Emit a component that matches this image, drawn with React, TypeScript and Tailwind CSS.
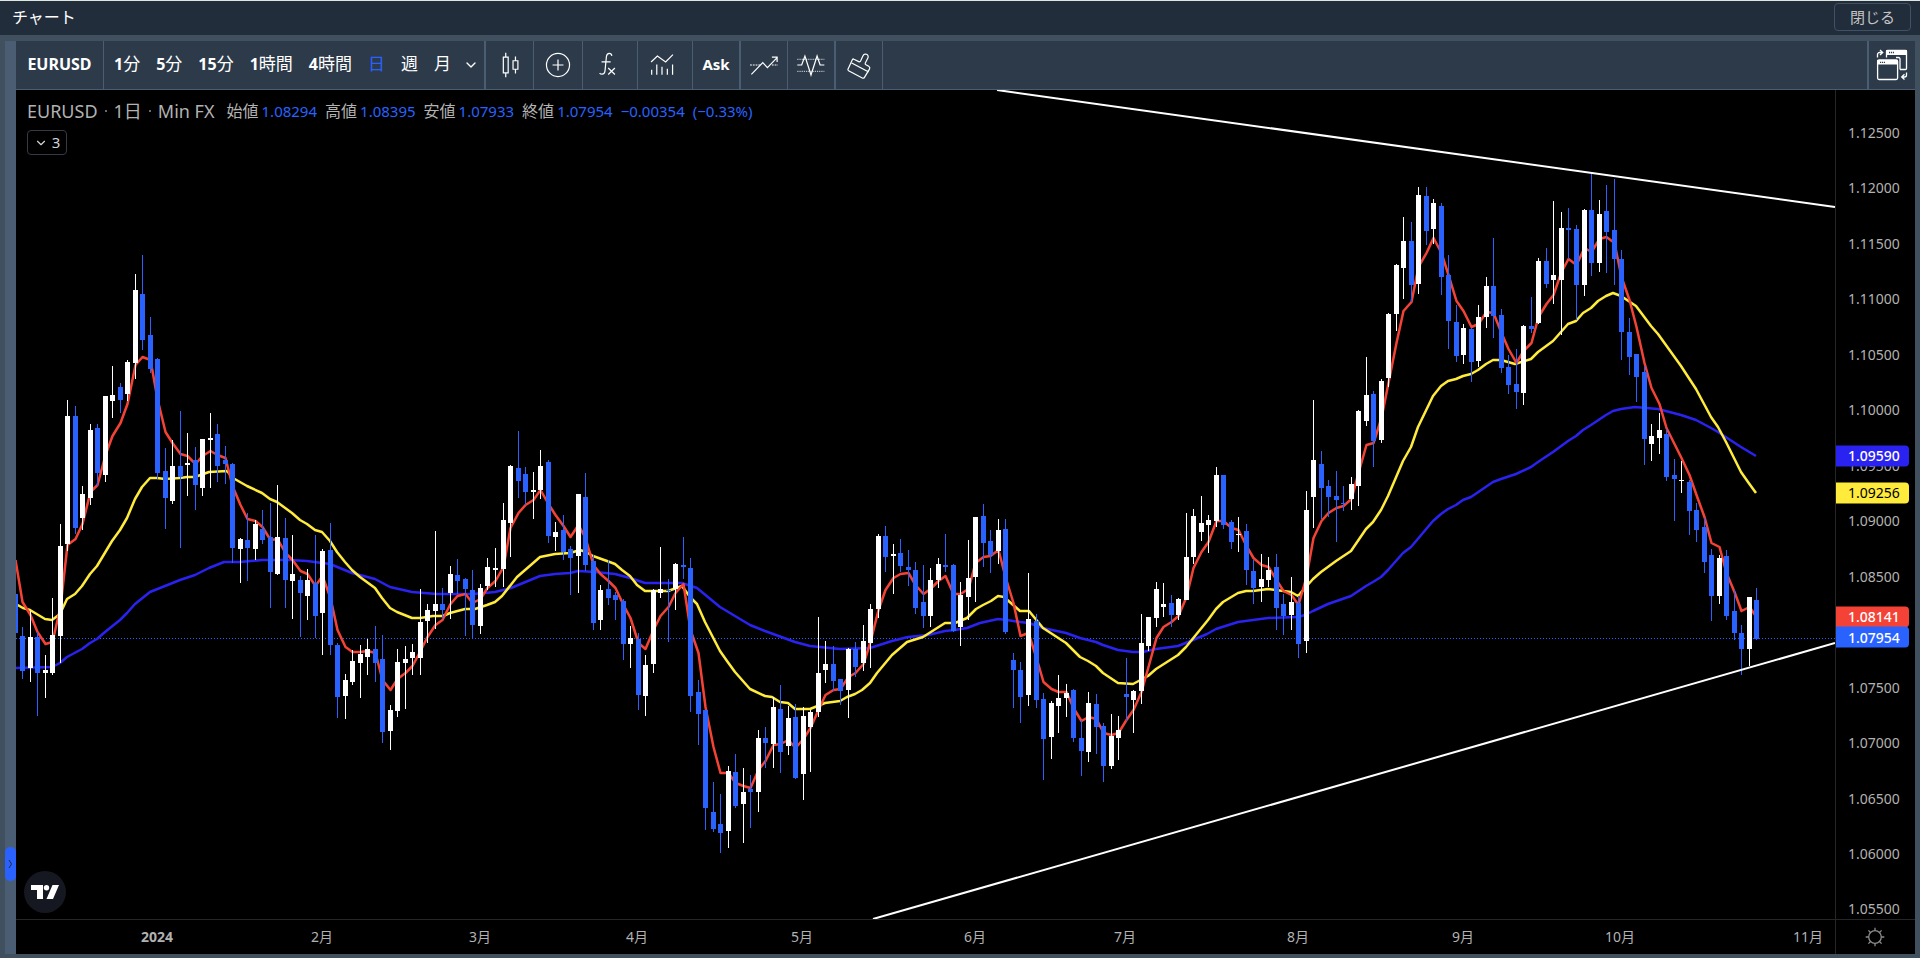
import { useState } from "react";
import type { ReactNode } from "react";
import { ChevronDown } from "lucide-react";

// plot area of the main pane
const PANE = { x: 16, y: 90, w: 1819, h: 829 };
const FIRST_BAR = -7;

const barX = (i: number) => Math.floor(67.6 + (i + FIRST_BAR) * 7.507);
const priceTop = (price: number) =>
  ((133 + (1.125 - price) * 11092 - PANE.y) / PANE.h) * 100;

// [up, high, body top, body bottom, low]
const candles = [
  [0,594,594,633,633],[0,627,636,671,679],[1,611,637,668,682],[0,632,637,673,716],[1,655,670,673,698],
  [1,598,635,673,675],[1,524,546,636,663],[1,400,416,544,551],[0,406,416,528,534],[1,486,494,518,530],
  [1,424,430,498,505],[0,424,428,473,486],[1,396,396,475,482],[1,366,395,401,418],[0,383,387,400,413],
  [1,360,362,394,401],[1,274,290,363,379],[0,255,294,340,350],[0,317,335,369,373],[0,358,359,473,479],
  [0,448,471,498,529],[1,440,466,501,504],[0,411,466,477,548],[1,433,463,465,496],[0,447,460,485,510],
  [1,439,439,488,496],[1,413,438,440,488],[0,424,434,466,482],[0,446,460,464,484],[0,463,464,548,563],
  [1,538,539,549,583],[0,513,540,548,581],[1,520,524,549,560],[0,510,529,540,544],[0,503,537,572,608],
  [1,485,537,574,575],[0,518,538,580,608],[1,535,574,581,619],[0,576,580,593,637],[1,569,580,596,620],
  [0,535,583,616,638],[1,549,551,613,655],[0,523,550,645,655],[0,643,645,697,718],[1,674,680,696,719],
  [1,650,661,682,685],[1,645,654,663,698],[1,639,649,657,675],[0,626,649,663,682],[0,635,659,732,743],
  [1,705,710,731,750],[1,649,662,711,717],[1,646,659,663,709],[1,644,652,658,675],[1,589,622,658,675],
  [1,604,610,621,643],[1,531,604,611,629],[0,588,604,610,619],[1,566,574,593,619],[0,559,575,581,594],
  [0,578,579,589,636],[0,570,590,625,638],[1,584,588,626,634],[1,558,567,586,590],[1,548,568,570,587],
  [1,503,520,569,587],[1,465,466,523,557],[0,431,468,481,498],[0,467,474,492,505],[1,472,490,492,519],
  [1,450,466,490,499],[0,460,462,536,543],[1,522,532,537,551],[0,515,530,552,560],[0,546,549,558,595],
  [1,494,494,556,593],[0,473,497,565,571],[0,555,561,623,630],[1,585,590,620,630],[0,560,589,598,605],
  [0,592,595,600,620],[0,599,601,644,660],[1,626,638,644,668],[0,633,639,695,710],[1,655,665,696,716],
  [1,589,590,664,673],[1,547,589,593,598],[0,579,590,591,642],[1,563,564,589,610],[0,537,565,567,579],
  [0,558,568,696,712],[0,680,692,714,745],[0,710,710,808,830],[0,782,812,829,832],[0,794,824,833,853],
  [1,766,771,831,848],[0,754,772,806,808],[1,768,792,804,843],[0,775,789,792,828],[1,730,738,792,812],
  [0,727,738,743,768],[1,697,707,744,768],[0,685,709,752,773],[1,706,718,746,755],[0,704,717,778,779],
  [1,707,716,774,800],[1,710,712,727,772],[1,617,673,712,717],[1,641,664,670,683],[0,646,664,681,691],
  [0,679,679,691,705],[1,648,649,690,718],[0,642,649,667,677],[1,625,641,663,671],[1,604,609,643,668],
  [1,534,536,609,618],[0,526,536,557,572],[1,544,554,556,594],[0,539,553,566,572],[0,550,567,570,586],
  [0,562,570,608,614],[0,565,602,616,628],[1,568,580,616,627],[1,558,564,580,588],[0,534,565,567,572],
  [0,564,565,631,632],[1,582,595,627,646],[1,540,578,597,620],[1,517,517,577,602],[0,504,516,543,567],
  [0,530,541,555,573],[1,519,530,551,564],[0,519,529,632,634],[0,653,660,670,708],[0,662,670,697,723],
  [1,573,619,695,706],[0,614,621,700,708],[0,693,699,739,780],[1,701,703,737,759],[1,675,698,706,733],
  [1,684,693,698,717],[0,689,690,738,742],[0,720,738,751,776],[1,692,703,752,762],[0,694,704,727,754],
  [0,723,726,766,782],[1,714,736,766,769],[1,716,730,738,760],[0,658,694,697,721],[1,690,691,700,733],
  [1,614,643,691,704],[1,617,617,646,651],[1,582,589,618,627],[1,583,604,607,617],[0,595,603,615,627],
  [1,598,599,615,620],[1,513,557,600,600],[1,509,516,557,564],[1,496,523,532,541],[1,515,520,525,553],
  [1,467,475,521,527],[0,475,475,525,529],[0,520,522,542,549],[1,517,534,535,552],[0,524,531,570,585],
  [0,560,571,588,604],[1,554,579,587,602],[1,557,570,580,587],[0,554,567,608,630],[0,594,604,616,635],
  [1,577,602,615,630],[0,596,603,644,658],[1,491,510,641,653],[1,400,460,497,528],[0,451,464,488,519],
  [0,480,486,497,517],[0,471,496,500,542],[0,486,503,504,511],[1,477,484,499,510],[1,410,411,486,506],
  [1,357,395,421,426],[0,391,394,441,467],[1,379,381,440,443],[1,313,314,378,387],[1,264,265,314,331],
  [1,217,241,268,299],[0,222,241,285,302],[1,187,195,284,294],[0,187,196,231,245],[1,199,203,229,244],
  [0,203,206,277,295],[0,255,275,321,349],[0,305,322,356,362],[1,324,328,355,364],[0,328,329,362,382],
  [1,305,317,361,367],[1,277,286,317,328],[0,238,286,316,338],[0,309,315,368,373],[0,355,367,385,394],
  [0,349,384,392,409],[1,325,326,393,405],[0,297,326,329,333],[1,258,261,323,324],[0,248,261,284,288],
  [1,201,275,280,304],[1,212,228,280,335],[0,208,228,230,259],[0,225,229,285,320],[1,209,210,285,296],
  [0,173,210,263,276],[1,200,214,263,272],[0,185,211,232,273],[0,179,230,259,285],[0,250,259,332,360],
  [0,318,332,357,375],[0,354,354,377,402],[0,366,372,439,465],[1,424,436,444,461],[1,413,430,438,454],
  [0,429,434,477,481],[0,459,475,479,521],[1,461,480,481,493],[0,480,482,511,535],[0,503,510,530,542],
  [0,518,527,562,573],[0,549,555,596,621],[1,555,558,596,604],[0,550,556,616,620],[0,590,611,633,640],
  [0,625,633,649,675],[1,597,597,649,666],[0,588,600,639,640],
];

// short average, one value per bar
const fastMa = [
  560,602,615,632,644,642,607,545,539,524,492,485,455,436,423,404,365,357,360,399,432,443,454,456,464,456,451,455,458,
  486,505,519,521,527,540,539,553,560,571,574,586,576,598,630,647,652,652,651,653,680,690,679,673,666,651,637,625,620,
  604,596,594,603,599,588,581,567,528,513,505,500,490,504,515,526,537,525,538,565,574,581,588,605,618,643,649,630,616,
  607,593,584,630,653,707,747,773,773,783,786,788,770,761,745,744,740,748,739,728,710,695,690,689,677,673,664,642,610,
  590,578,574,573,585,594,589,581,576,594,594,589,563,557,556,550,577,603,636,633,658,682,689,692,692,708,721,717,719,
  733,735,733,720,710,692,667,638,627,622,616,597,568,552,542,521,521,528,530,546,558,565,567,580,591,595,605,577,538,
  521,513,508,506,499,473,445,443,418,383,343,311,302,267,253,238,253,275,301,311,327,324,312,313,333,349,363,351,343,
  317,304,295,272,259,265,248,252,239,237,243,277,300,327,363,388,404,428,444,458,475,495,517,543,547,573,592,611,607,
  617,
];

const midMa =
  "16,604 23,608 30,610 45,619 52,620 60,614 67,599 75,594 82,586 90,574 97,566 112,541 120,530 127,518 135,499 142,487 150,478 157,478 165,479 180,478 187,477 195,477 209,472 227,471 233,478 247,486 262,493 270,499 277,502 292,513 300,520 307,524 315,530 322,532 330,541 337,552 345,562 352,570 360,577 375,588 382,598 390,608 397,612 412,618 420,618 433,616 443,616 450,613 465,609 475,609 487,605 495,602 502,596 517,577 532,564 540,557 555,554 570,553 580,550 586,552 593,556 607,561 615,564 622,570 630,576 637,585 645,591 668,591 682,586 690,597 697,604 705,622 720,651 727,661 735,672 750,689 765,696 772,697 780,702 788,703 795,709 810,709 825,703 840,701 847,697 855,694 862,690 870,683 877,673 892,655 907,642 923,637 945,623 955,623 967,618 976,609 983,605 991,601 998,596 1004,597 1020,611 1029,611 1043,628 1066,643 1080,657 1088,661 1096,666 1103,673 1118,683 1133,684 1148,676 1156,669 1178,655 1186,647 1208,620 1216,609 1223,602 1238,593 1246,591 1253,591 1268,589 1291,592 1298,596 1305,588 1313,579 1321,572 1336,561 1351,551 1366,529 1373,522 1381,510 1388,496 1403,461 1411,447 1418,427 1433,396 1441,386 1448,381 1456,379 1463,376 1471,374 1478,370 1486,364 1493,360 1501,360 1515,364 1531,359 1538,352 1553,341 1568,324 1576,321 1583,313 1591,308 1598,301 1606,296 1613,293 1621,296 1636,306 1651,326 1658,334 1681,366 1696,389 1711,417 1718,427 1726,442 1741,472 1748,482 1756,493";

const slowMa =
  "16,668 52,667 60,663 67,657 82,649 90,643 97,639 105,632 120,620 127,613 135,604 150,592 180,580 195,575 209,568 224,562 240,562 262,560 290,560 307,561 330,564 352,573 375,579 390,587 412,592 437,594 473,594 495,592 511,588 540,576 555,574 570,573 578,571 595,572 615,574 630,578 645,583 682,583 697,588 720,607 750,625 765,631 795,642 810,646 840,649 870,648 892,641 908,637 928,635 945,631 955,630 967,628 980,623 998,619 1007,620 1020,622 1029,623 1043,628 1066,633 1080,638 1096,642 1103,645 1118,650 1133,652 1143,652 1156,649 1178,646 1193,640 1207,634 1216,629 1238,622 1253,620 1268,618 1298,617 1305,615 1313,611 1328,604 1351,596 1366,586 1373,582 1381,577 1388,570 1403,553 1411,547 1433,521 1441,514 1448,509 1456,505 1463,500 1471,497 1493,482 1501,479 1516,474 1531,467 1538,462 1553,452 1568,441 1576,436 1583,430 1591,425 1606,415 1613,411 1621,409 1635,407 1658,409 1681,415 1696,420 1711,428 1718,432 1741,447 1756,456";

const intervals = [
  { n: "1", unit: "分" },
  { n: "5", unit: "分" },
  { n: "15", unit: "分" },
  { n: "1", unit: "時間" },
  { n: "4", unit: "時間" },
  { n: "", unit: "日" },
  { n: "", unit: "週" },
  { n: "", unit: "月" },
];

const ohlc = [
  { label: "始値", value: "1.08294" },
  { label: "高値", value: "1.08395" },
  { label: "安値", value: "1.07933" },
  { label: "終値", value: "1.07954" },
];

const prices = Array.from({ length: 15 }, (_, i) => 1.125 - i * 0.005);

const tags = [
  { price: 1.0959, style: "bg-[#2a22f0] font-medium text-white" },
  { price: 1.09256, style: "bg-[#ffeb3b] text-black" },
  { price: 1.08141, style: "bg-[#f44336] font-medium text-white" },
  { price: 1.07954, style: "bg-[#2962ff] font-medium text-white" },
];

const months = [
  { x: 157, label: "2024" },
  { x: 322, label: "2月" },
  { x: 480, label: "3月" },
  { x: 637, label: "4月" },
  { x: 802, label: "5月" },
  { x: 975, label: "6月" },
  { x: 1125, label: "7月" },
  { x: 1298, label: "8月" },
  { x: 1463, label: "9月" },
  { x: 1620, label: "10月" },
  { x: 1808, label: "11月" },
];

const Icon = ({ children }: { children: ReactNode }) => (
  <svg viewBox="0 0 28 28" fill="none" stroke="currentColor" className="h-[34px] w-[34px]">
    {children}
  </svg>
);

const Tool = ({ label, className, children }: { label: string; className: string; children: ReactNode }) => (
  <button
    type="button"
    aria-label={label}
    className={`flex shrink-0 items-center justify-center border-[#4a5d72] hover:bg-[#364759] ${className}`}
  >
    {children}
  </button>
);

const Toolbar = () => {
  const [interval, setInterval] = useState(5);

  return (
    <div className="flex h-[49px] shrink-0 border-b border-[#4a5d72] bg-[#2c3a4a] text-white">
      <button type="button" className="w-[88px] shrink-0 border-r border-[#4a5d72] pb-[2px] text-base font-bold">
        EURUSD
      </button>
      <div className="flex w-[382px] shrink-0 items-center border-r-2 border-[#4a5d72] pl-[2px]">
        {intervals.map((item, i) => (
          <button
            key={item.n + item.unit}
            type="button"
            onClick={() => setInterval(i)}
            className={`h-full px-2 pb-[2px] text-base whitespace-nowrap ${interval === i ? "text-[#2962ff]" : "text-white"}`}
          >
            <span className="font-bold">{item.n}</span>
            <span className="text-[17px]">{item.unit}</span>
          </button>
        ))}
        <button type="button" aria-label="時間足" className="flex h-full flex-1 items-center justify-center">
          <ChevronDown className="h-4 w-4" strokeWidth={2} />
        </button>
      </div>
      <Tool label="ローソク足" className="w-12 border-r">
        <Icon>
          <path d="M8.500 7.500h4v13h-4zM10.500 4v3.500M10.500 20.500V24M16.500 10.500h4v7h-4zM18.500 7v3.500M18.500 17.500V21" />
        </Icon>
      </Tool>
      <Tool label="比較" className="w-[49px] border-r">
        <Icon>
          <circle cx="14" cy="14" r="9.500" />
          <path d="M9.500 14h9M14 9.500v9" />
        </Icon>
      </Tool>
      <Tool label="インジケーター" className="w-[55px] border-r pr-[6px]">
        <Icon>
          <path d="M18 6.500c-.2-1.300-.9-2-2.100-2-1.500 0-2.200 1-2.400 2.700l-1.100 11.200c-.2 2.100-1 3.100-2.500 3.100-.8 0-1.500-.3-2-.9M9.500 11.500H17M15 16.500l5.500 5.300M20.500 16.500l-5.500 5.300" />
        </Icon>
      </Tool>
      <Tool label="テンプレート" className="w-[55px] border-r pr-[6px]">
        <Icon>
          <path d="M5 11.500l5.200-4.900 6.800 4.900 6-6M5.500 18v4M9.700 13.500V22M14 15.500V22M18.400 17v5M22.700 13.500V22" />
        </Icon>
      </Tool>
      <Tool label="Ask" className="w-12 border-r-2 pb-[2px]">
        <span className="text-[15px] font-bold">Ask</span>
      </Tool>
      <Tool label="トレンドライン" className="w-[47px] border-r">
        <Icon>
          <path d="M3.600 21.700l9.400-9.600 3.800 4.100 8-8.300M20.500 7.500h4.300v4" />
          <path d="M2.500 14h8.500M20.500 14h5" strokeDasharray="1.500 .8" />
        </Icon>
      </Tool>
      <Tool label="波形" className="w-12 border-r-2">
        <Icon>
          <path d="M2.700 14h3.600L9 6.600l5 15.600 5-15.600 2.500 7.400h3.500" />
          <path d="M2.700 9.300h22.300M2.700 19.200h22.300" strokeDasharray="1 .8" strokeWidth=".7" />
        </Icon>
      </Tool>
      <Tool label="ブラシ" className="w-[47px] border-r">
        <Icon>
          <path
            d="M9.800 9.200l4 2c.6.300 1.200.1 1.500-.5l1.900-4.200c.6-1.400 1.800-1.800 3-1.300 1.300.6 1.700 1.900 1.100 3.100l-2.100 4c-.3.600-.1 1.200.5 1.500l2.300 1.300c.8.500 1.100 1.300.7 2.100l-4.200 7c-.4.700-1.100.9-1.800.5L5.400 18.700c-.5-.3-.7-.9-.4-1.500l3.500-7.500c.3-.5.800-.8 1.300-.5zM8 12.300l14 7.500"
          />
        </Icon>
      </Tool>
      <Tool label="ウィンドウ切替" className="ml-auto w-12 border-l-2">
        <svg viewBox="0 0 34 34" fill="none" stroke="currentColor" strokeWidth="1.300" className="h-[34px] w-[34px]">
          <path d="M25 21.500h5.500a1 1 0 0 0 1-1V3.500a1 1 0 0 0-1-1H12.500a1 1 0 0 0-1 1V9.500" />
          <path d="M11 2h21v5H11z" fill="currentColor" stroke="none" />
          <path d="M21 9.500h2.500a1.500 1.500 0 0 1 1.500 1.500V21.500" />
          <rect x="2.600" y="12" width="20" height="19.500" rx="1.500" />
          <path d="M2 12h21v4.500H2z" fill="currentColor" stroke="none" />
          <path d="M14 4.500h5M5 14.300h5" stroke="#2c3a4a" strokeDasharray="1.200 .8" />
          <path d="M2.500 9.500V6.500a2 2 0 0 1 2-2H7M5 2l2.700 2.500L5 7M31.500 24.500V27a2 2 0 0 1-2 2H27M29.500 26.300L26.700 29l2.800 2.600" />
        </svg>
      </Tool>
    </div>
  );
};

const Plot = () => (
  <svg
    viewBox="16 90 1819 829"
    preserveAspectRatio="none"
    fill="none"
    className="absolute inset-0 h-full w-full"
    role="img"
    aria-label="EURUSD"
  >
    <path d="M16 638.500H1835" stroke="#2962ff" strokeDasharray="1 2" />
    <g strokeWidth="2.500" strokeLinejoin="round">
      <polyline points={slowMa} stroke="#2a22f0" />
      <polyline points={midMa} stroke="#ffeb3b" />
      <polyline points={fastMa.map((y, i) => `${barX(i) + 0.5},${y}`).join(" ")} stroke="#f44336" />
    </g>
    {candles.map(([up, high, top, bottom, low], i) => (
      <g key={i} fill={up ? "#ffffff" : "#2962ff"}>
        <rect x={barX(i)} y={high} width={1} height={low - high} />
        <rect x={barX(i) - 2} y={top} width={5} height={Math.max(bottom - top, 1)} />
      </g>
    ))}
    <path d="M997 90L1835 207M873 919L1835 643" stroke="#ffffff" strokeWidth="2" />
  </svg>
);

const Legend = () => (
  <div className="relative px-[11px] pt-[7px] text-[#b2b2b2]">
    <div className="flex h-7 items-center whitespace-nowrap">
      <h1 className="flex items-center gap-[7px] text-[18px]">
        EURUSD
        <i className="h-[2px] w-[2px] bg-[#6b6b6b]" />
        1日
        <i className="h-[2px] w-[2px] bg-[#6b6b6b]" />
        Min FX
      </h1>
      <dl className="ml-3 flex items-center gap-2 text-[15px]">
        {ohlc.map((item) => (
          <div key={item.label} className="flex items-center gap-[3px]">
            <dt className="text-base">{item.label}</dt>
            <dd className="text-[#2962ff]">{item.value}</dd>
          </div>
        ))}
        <dd className="text-[#2962ff]">−0.00354</dd>
        <dd className="text-[#2962ff]">(−0.33%)</dd>
      </dl>
    </div>
    <button
      type="button"
      className="mt-[5px] flex h-[25px] w-10 items-center justify-center gap-1 rounded border border-[#363a45] text-[15px] text-[#d1d4dc]"
    >
      <ChevronDown className="h-[14px] w-[14px]" strokeWidth={2} />3
    </button>
  </div>
);

const PriceAxis = () => (
  <div className="relative overflow-hidden border-l border-[#262626] text-sm">
    {prices.map((price) => (
      <span
        key={price}
        className="absolute left-3 -translate-y-1/2 text-[#b2b2b2]"
        style={{ top: `${priceTop(price)}%` }}
      >
        {price.toFixed(5)}
      </span>
    ))}
    {tags.map((tag) => (
      <span
        key={tag.price}
        className={`absolute -left-px flex h-[21px] w-[74px] -translate-y-1/2 items-center rounded-r-sm pl-[13px] ${tag.style}`}
        style={{ top: `${priceTop(tag.price)}%` }}
      >
        {tag.price.toFixed(5)}
      </span>
    ))}
  </div>
);

const TimeAxis = () => (
  <div className="relative overflow-hidden border-t border-[#262626] text-sm text-[#b2b2b2]">
    {months.map((m) => (
      <span
        key={m.label}
        className={`absolute top-1/2 -translate-x-1/2 -translate-y-1/2 whitespace-nowrap ${m.label === "2024" ? "font-bold" : ""}`}
        style={{ left: `${((m.x - PANE.x) / PANE.w) * 100}%` }}
      >
        {m.label}
      </span>
    ))}
  </div>
);

const App = () => {
  return (
    <div className="flex h-screen flex-col overflow-hidden border-t border-[#dfe6e0] bg-[#41505f] font-['Noto_Sans','Noto_Sans_CJK_JP',sans-serif]">
      <header className="flex h-[34px] shrink-0 items-center justify-between bg-[#222d3b] pr-[9px] pb-[2px] pl-3">
        <h2 className="text-base text-white">チャート</h2>
        <button
          type="button"
          className="h-7 w-[77px] rounded-sm border border-[#3f5163] text-[15px] leading-6 text-[#c4c4c4] hover:text-white"
        >
          閉じる
        </button>
      </header>

      <main className="flex min-h-0 flex-1 px-[5px] pt-[6px] pb-1">
        <div className="flex w-[11px] shrink-0 flex-col justify-end bg-[#4a5d72] pb-[73px]">
          <button
            type="button"
            aria-label="パネルを開く"
            className="flex h-[34px] items-center justify-center rounded-[5px] bg-[#2962ff] text-[#222d3b]"
          >
            <svg viewBox="0 0 5 10" fill="none" stroke="currentColor" className="h-[10px] w-[5px]">
              <path d="M1 1l2.500 4L1 9" />
            </svg>
          </button>
        </div>

        <div className="flex min-w-0 flex-1 flex-col">
          <Toolbar />
          <div className="grid min-h-0 flex-1 grid-cols-[1fr_80px] grid-rows-[1fr_35px] bg-black">
            <div className="relative overflow-hidden">
              <Plot />
              <Legend />
              <a
                href="#tradingview"
                aria-label="TradingView"
                className="absolute bottom-[6px] left-2 flex h-[42px] w-[42px] items-center justify-center rounded-full bg-[#161821] text-white"
              >
                <svg viewBox="0 0 28 14" fill="currentColor" className="h-[14px] w-7">
                  <path d="M0 0h12v14H6V5H0zM21.500 0H28l-6 14h-6.500z" />
                  <circle cx="15.500" cy="2.700" r="2.700" />
                </svg>
              </a>
            </div>
            <PriceAxis />
            <TimeAxis />
            <button
              type="button"
              aria-label="設定"
              className="flex items-center justify-center border-t border-l border-[#262626] pr-[2px] text-[#8c8c8c]"
            >
              <svg viewBox="0 0 20 20" fill="none" stroke="currentColor" strokeWidth="1.300" className="h-5 w-5">
                <circle cx="10" cy="10" r="6.300" />
                <path d="M10 .7v3M10 16.300v3M.7 10h3M16.300 10h3M3.400 3.400l2.100 2.100M14.500 14.500l2.100 2.100M16.600 3.400l-2.100 2.100M5.500 14.500l-2.100 2.100" />
              </svg>
            </button>
          </div>
        </div>
      </main>
    </div>
  );
};

export default App;
